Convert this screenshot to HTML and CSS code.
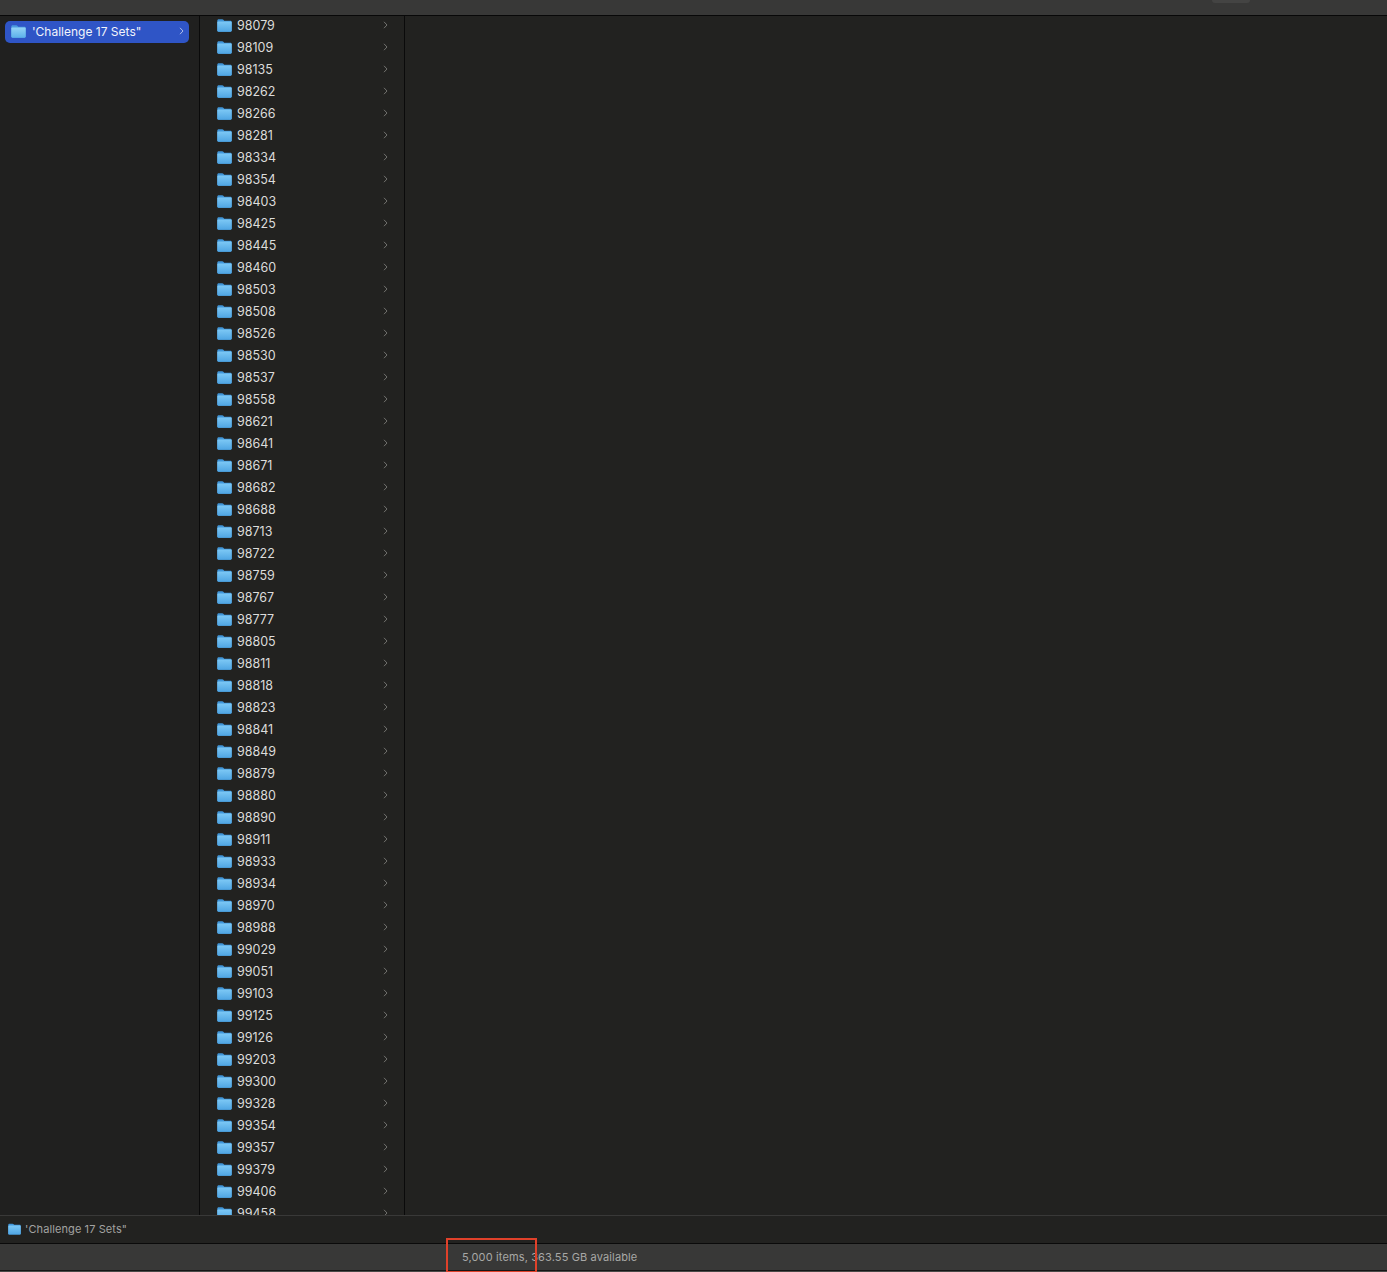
FILE: index.html
```html
<!DOCTYPE html>
<html lang="en">
<head>
<meta charset="utf-8">
<title>Finder</title>
<link rel="stylesheet" href="styles.css">
</head>
<body>
<svg class="defs" width="0" height="0" aria-hidden="true">
  <defs>
    <linearGradient id="fg" x1="0" y1="0" x2="0" y2="1">
      <stop offset="0" stop-color="#7cc8f5"/>
      <stop offset="1" stop-color="#4fa5e3"/>
    </linearGradient>
    <linearGradient id="fgs" x1="0" y1="0" x2="0" y2="1">
      <stop offset="0" stop-color="#93d3f6"/>
      <stop offset="1" stop-color="#5cb0ea"/>
    </linearGradient>
    <symbol id="folder" viewBox="0 0 15 13">
      <path d="M0.3 1.8C0.3 0.8 0.8 0.3 1.8 0.3H5.2C5.9 0.3 6.2 0.6 6.6 1L7.2 1.7H13.2C14.2 1.7 14.7 2.2 14.7 3.2V11.6C14.7 12.3 14.2 12.8 13.5 12.8H1.5C0.8 12.8 0.3 12.3 0.3 11.6Z" fill="#4095d8"/>
      <path d="M0.3 3.6C0.3 3 0.7 2.6 1.3 2.6H13.7C14.3 2.6 14.7 3 14.7 3.6V11.6C14.7 12.3 14.2 12.8 13.5 12.8H1.5C0.8 12.8 0.3 12.3 0.3 11.6Z" fill="url(#fg)"/>
    </symbol>
    <symbol id="folder-selected" viewBox="0 0 15 13">
      <path d="M0.3 1.8C0.3 0.8 0.8 0.3 1.8 0.3H5.2C5.9 0.3 6.2 0.6 6.6 1L7.2 1.7H13.2C14.2 1.7 14.7 2.2 14.7 3.2V11.6C14.7 12.3 14.2 12.8 13.5 12.8H1.5C0.8 12.8 0.3 12.3 0.3 11.6Z" fill="#4b9be0"/>
      <path d="M0.3 3.6C0.3 3 0.7 2.6 1.3 2.6H13.7C14.3 2.6 14.7 3 14.7 3.6V11.6C14.7 12.3 14.2 12.8 13.5 12.8H1.5C0.8 12.8 0.3 12.3 0.3 11.6Z" fill="url(#fgs)"/>
    </symbol>
    <symbol id="chev" viewBox="0 0 5 8">
      <path d="M1 0.8L4 4L1 7.2" fill="none" stroke="currentColor" stroke-width="1"/>
    </symbol>
  </defs>
</svg>
<div class="window">
  <header class="toolbar"><span class="tool-tab"></span></header>
  <main class="columns">
    <section class="col col-root">
      <div class="row-selected">
        <svg class="ficon"><use href="#folder-selected"/></svg>
        <span class="name">'Challenge 17 Sets"</span>
        <svg class="chev"><use href="#chev"/></svg>
      </div>
    </section>
    <section class="col col-list">
      <div class="list-scroll">
        <div class="row"><svg class="ficon"><use href="#folder"/></svg><span class="name">98079</span><svg class="chev"><use href="#chev"/></svg></div>
        <div class="row"><svg class="ficon"><use href="#folder"/></svg><span class="name">98109</span><svg class="chev"><use href="#chev"/></svg></div>
        <div class="row"><svg class="ficon"><use href="#folder"/></svg><span class="name">98135</span><svg class="chev"><use href="#chev"/></svg></div>
        <div class="row"><svg class="ficon"><use href="#folder"/></svg><span class="name">98262</span><svg class="chev"><use href="#chev"/></svg></div>
        <div class="row"><svg class="ficon"><use href="#folder"/></svg><span class="name">98266</span><svg class="chev"><use href="#chev"/></svg></div>
        <div class="row"><svg class="ficon"><use href="#folder"/></svg><span class="name">98281</span><svg class="chev"><use href="#chev"/></svg></div>
        <div class="row"><svg class="ficon"><use href="#folder"/></svg><span class="name">98334</span><svg class="chev"><use href="#chev"/></svg></div>
        <div class="row"><svg class="ficon"><use href="#folder"/></svg><span class="name">98354</span><svg class="chev"><use href="#chev"/></svg></div>
        <div class="row"><svg class="ficon"><use href="#folder"/></svg><span class="name">98403</span><svg class="chev"><use href="#chev"/></svg></div>
        <div class="row"><svg class="ficon"><use href="#folder"/></svg><span class="name">98425</span><svg class="chev"><use href="#chev"/></svg></div>
        <div class="row"><svg class="ficon"><use href="#folder"/></svg><span class="name">98445</span><svg class="chev"><use href="#chev"/></svg></div>
        <div class="row"><svg class="ficon"><use href="#folder"/></svg><span class="name">98460</span><svg class="chev"><use href="#chev"/></svg></div>
        <div class="row"><svg class="ficon"><use href="#folder"/></svg><span class="name">98503</span><svg class="chev"><use href="#chev"/></svg></div>
        <div class="row"><svg class="ficon"><use href="#folder"/></svg><span class="name">98508</span><svg class="chev"><use href="#chev"/></svg></div>
        <div class="row"><svg class="ficon"><use href="#folder"/></svg><span class="name">98526</span><svg class="chev"><use href="#chev"/></svg></div>
        <div class="row"><svg class="ficon"><use href="#folder"/></svg><span class="name">98530</span><svg class="chev"><use href="#chev"/></svg></div>
        <div class="row"><svg class="ficon"><use href="#folder"/></svg><span class="name">98537</span><svg class="chev"><use href="#chev"/></svg></div>
        <div class="row"><svg class="ficon"><use href="#folder"/></svg><span class="name">98558</span><svg class="chev"><use href="#chev"/></svg></div>
        <div class="row"><svg class="ficon"><use href="#folder"/></svg><span class="name">98621</span><svg class="chev"><use href="#chev"/></svg></div>
        <div class="row"><svg class="ficon"><use href="#folder"/></svg><span class="name">98641</span><svg class="chev"><use href="#chev"/></svg></div>
        <div class="row"><svg class="ficon"><use href="#folder"/></svg><span class="name">98671</span><svg class="chev"><use href="#chev"/></svg></div>
        <div class="row"><svg class="ficon"><use href="#folder"/></svg><span class="name">98682</span><svg class="chev"><use href="#chev"/></svg></div>
        <div class="row"><svg class="ficon"><use href="#folder"/></svg><span class="name">98688</span><svg class="chev"><use href="#chev"/></svg></div>
        <div class="row"><svg class="ficon"><use href="#folder"/></svg><span class="name">98713</span><svg class="chev"><use href="#chev"/></svg></div>
        <div class="row"><svg class="ficon"><use href="#folder"/></svg><span class="name">98722</span><svg class="chev"><use href="#chev"/></svg></div>
        <div class="row"><svg class="ficon"><use href="#folder"/></svg><span class="name">98759</span><svg class="chev"><use href="#chev"/></svg></div>
        <div class="row"><svg class="ficon"><use href="#folder"/></svg><span class="name">98767</span><svg class="chev"><use href="#chev"/></svg></div>
        <div class="row"><svg class="ficon"><use href="#folder"/></svg><span class="name">98777</span><svg class="chev"><use href="#chev"/></svg></div>
        <div class="row"><svg class="ficon"><use href="#folder"/></svg><span class="name">98805</span><svg class="chev"><use href="#chev"/></svg></div>
        <div class="row"><svg class="ficon"><use href="#folder"/></svg><span class="name">98811</span><svg class="chev"><use href="#chev"/></svg></div>
        <div class="row"><svg class="ficon"><use href="#folder"/></svg><span class="name">98818</span><svg class="chev"><use href="#chev"/></svg></div>
        <div class="row"><svg class="ficon"><use href="#folder"/></svg><span class="name">98823</span><svg class="chev"><use href="#chev"/></svg></div>
        <div class="row"><svg class="ficon"><use href="#folder"/></svg><span class="name">98841</span><svg class="chev"><use href="#chev"/></svg></div>
        <div class="row"><svg class="ficon"><use href="#folder"/></svg><span class="name">98849</span><svg class="chev"><use href="#chev"/></svg></div>
        <div class="row"><svg class="ficon"><use href="#folder"/></svg><span class="name">98879</span><svg class="chev"><use href="#chev"/></svg></div>
        <div class="row"><svg class="ficon"><use href="#folder"/></svg><span class="name">98880</span><svg class="chev"><use href="#chev"/></svg></div>
        <div class="row"><svg class="ficon"><use href="#folder"/></svg><span class="name">98890</span><svg class="chev"><use href="#chev"/></svg></div>
        <div class="row"><svg class="ficon"><use href="#folder"/></svg><span class="name">98911</span><svg class="chev"><use href="#chev"/></svg></div>
        <div class="row"><svg class="ficon"><use href="#folder"/></svg><span class="name">98933</span><svg class="chev"><use href="#chev"/></svg></div>
        <div class="row"><svg class="ficon"><use href="#folder"/></svg><span class="name">98934</span><svg class="chev"><use href="#chev"/></svg></div>
        <div class="row"><svg class="ficon"><use href="#folder"/></svg><span class="name">98970</span><svg class="chev"><use href="#chev"/></svg></div>
        <div class="row"><svg class="ficon"><use href="#folder"/></svg><span class="name">98988</span><svg class="chev"><use href="#chev"/></svg></div>
        <div class="row"><svg class="ficon"><use href="#folder"/></svg><span class="name">99029</span><svg class="chev"><use href="#chev"/></svg></div>
        <div class="row"><svg class="ficon"><use href="#folder"/></svg><span class="name">99051</span><svg class="chev"><use href="#chev"/></svg></div>
        <div class="row"><svg class="ficon"><use href="#folder"/></svg><span class="name">99103</span><svg class="chev"><use href="#chev"/></svg></div>
        <div class="row"><svg class="ficon"><use href="#folder"/></svg><span class="name">99125</span><svg class="chev"><use href="#chev"/></svg></div>
        <div class="row"><svg class="ficon"><use href="#folder"/></svg><span class="name">99126</span><svg class="chev"><use href="#chev"/></svg></div>
        <div class="row"><svg class="ficon"><use href="#folder"/></svg><span class="name">99203</span><svg class="chev"><use href="#chev"/></svg></div>
        <div class="row"><svg class="ficon"><use href="#folder"/></svg><span class="name">99300</span><svg class="chev"><use href="#chev"/></svg></div>
        <div class="row"><svg class="ficon"><use href="#folder"/></svg><span class="name">99328</span><svg class="chev"><use href="#chev"/></svg></div>
        <div class="row"><svg class="ficon"><use href="#folder"/></svg><span class="name">99354</span><svg class="chev"><use href="#chev"/></svg></div>
        <div class="row"><svg class="ficon"><use href="#folder"/></svg><span class="name">99357</span><svg class="chev"><use href="#chev"/></svg></div>
        <div class="row"><svg class="ficon"><use href="#folder"/></svg><span class="name">99379</span><svg class="chev"><use href="#chev"/></svg></div>
        <div class="row"><svg class="ficon"><use href="#folder"/></svg><span class="name">99406</span><svg class="chev"><use href="#chev"/></svg></div>
        <div class="row"><svg class="ficon"><use href="#folder"/></svg><span class="name">99458</span><svg class="chev"><use href="#chev"/></svg></div>
      </div>
    </section>
    <section class="col col-empty"></section>
  </main>
  <nav class="pathbar">
    <svg class="ficon ficon-sm"><use href="#folder"/></svg>
    <span>'Challenge 17 Sets"</span>
  </nav>
  <footer class="statusbar"><span>5,000 items, 363.55 GB available</span></footer>
  <div class="annot"></div>
</div>
</body>
</html>
```
FILE: styles.css
```css
* { box-sizing: border-box; }
html, body { margin: 0; height: 100%; }
body {
  background: #222220;
  font-family: "Inter", "Liberation Sans", sans-serif;
  overflow: hidden;
}
.defs { position: absolute; }
.window {
  position: relative;
  width: 1387px;
  height: 1272px;
  display: flex;
  flex-direction: column;
}
.toolbar {
  height: 16px;
  flex: none;
  background: #383837;
  border-bottom: 1px solid #080808;
  display: flex;
  justify-content: flex-end;
  padding-right: 137px;
}
.tool-tab {
  width: 38px;
  height: 3px;
  background: #444443;
  border-radius: 0 0 4px 4px;
}
.columns {
  flex: 1;
  min-height: 0;
  display: flex;
  background: #222220;
}
.col { height: 100%; overflow: hidden; }
.col-root {
  width: 200px;
  flex: none;
  border-right: 1px solid #0a0a0a;
  padding: 5px 10px 0 5px;
  background: #20201f;
}
.col-list {
  width: 205px;
  flex: none;
  border-right: 1px solid #0a0a0a;
}
.list-scroll { margin-top: -2px; }
.col-empty { flex: 1; }
.row-selected {
  height: 22px;
  display: flex;
  align-items: center;
  padding: 0 5px 2px 6px;
  border-radius: 5px;
  background: #2f55c6;
  color: #f2f4fb;
  font-size: 12px;
}
.row-selected .name { flex: 1; margin-left: 6px; }
.row-selected .chev { color: #aebde8; }
.row {
  height: 22px;
  display: flex;
  align-items: center;
  padding: 0 16px 0 17px;
  color: #dcdcdb;
  font-size: 12.5px;
}
.row .name { flex: 1; margin-left: 5px; }
.row .ficon { margin-top: 1px; }
.row .chev { color: #72726f; }
.ficon { width: 15px; height: 13px; flex: none; }
.ficon-sm { width: 13px; height: 12px; }
.chev { width: 5px; height: 8px; flex: none; }
.pathbar {
  height: 29px;
  flex: none;
  display: flex;
  align-items: center;
  gap: 4px;
  padding: 0 0 2px 8px;
  background: #222220;
  border-top: 1px solid #393938;
  border-bottom: 1px solid #0a0a0a;
  color: #a3a3a1;
  font-size: 11px;
  letter-spacing: 0.1px;
}
.statusbar {
  height: 28px;
  flex: none;
  display: flex;
  align-items: center;
  padding: 0 0 2px 462px;
  background: linear-gradient(#383837 0 26px, #161616 26px 27px, #4a4a48 27px);
  color: #a8a8a6;
  font-size: 11px;
  letter-spacing: 0.13px;
}
.annot {
  position: absolute;
  left: 446px;
  top: 1238px;
  width: 91px;
  height: 34px;
  border: 2px solid #e0412a;
  border-bottom-width: 1px;
}
```
